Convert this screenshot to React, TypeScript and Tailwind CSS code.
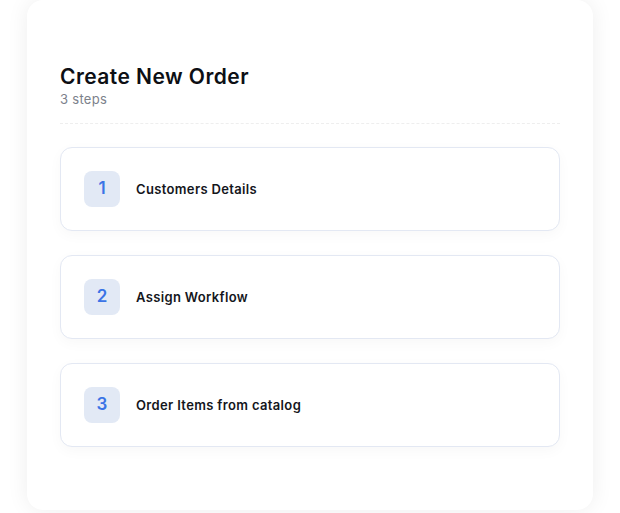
const steps = [
  { id: 1, title: "Customers Details" },
  { id: 2, title: "Assign Workflow" },
  { id: 3, title: "Order Items from catalog" },
];

function StepCard({ id, title }: { id: number; title: string }) {
  return (
    <div className="h-[84px] flex items-center gap-[16px] px-[23px] bg-white border border-[#e3e8f3] rounded-xl shadow-[0_4px_14px_rgba(15,23,42,0.03)]">
      <div className="w-9 h-9 rounded-lg bg-[#e2e9f5] flex items-center justify-center text-[17px] font-semibold text-[#3b74e6]">
        {id}
      </div>
      <span className="pt-[2px] text-[13px] font-semibold tracking-[0.35px] text-[#14161c]">{title}</span>
    </div>
  );
}

export default function App() {
  return (
    <div
      className="h-[513px] bg-white px-[27px] pb-[3px]"
      style={{ fontFamily: "Inter, 'Noto Sans', sans-serif" }}
    >
      <div className="h-full bg-white rounded-2xl shadow-[0_0_22px_rgba(0,0,0,0.07)] pt-[63px] px-[33px]">
        <h1 className="text-[21px] leading-[28px] font-semibold text-[#0d0f14] tracking-[0.45px]">
          Create New Order
        </h1>
        <p className="text-[13px] leading-[17px] text-[#7c818b] tracking-[0.3px]">3 steps</p>

        <div className="mt-[15px] border-t border-dashed border-[#eeeeee]" />

        <div className="mt-[23px] flex flex-col gap-6">
          {steps.map((s) => (
            <StepCard key={s.id} id={s.id} title={s.title} />
          ))}
        </div>
      </div>
    </div>
  );
}
